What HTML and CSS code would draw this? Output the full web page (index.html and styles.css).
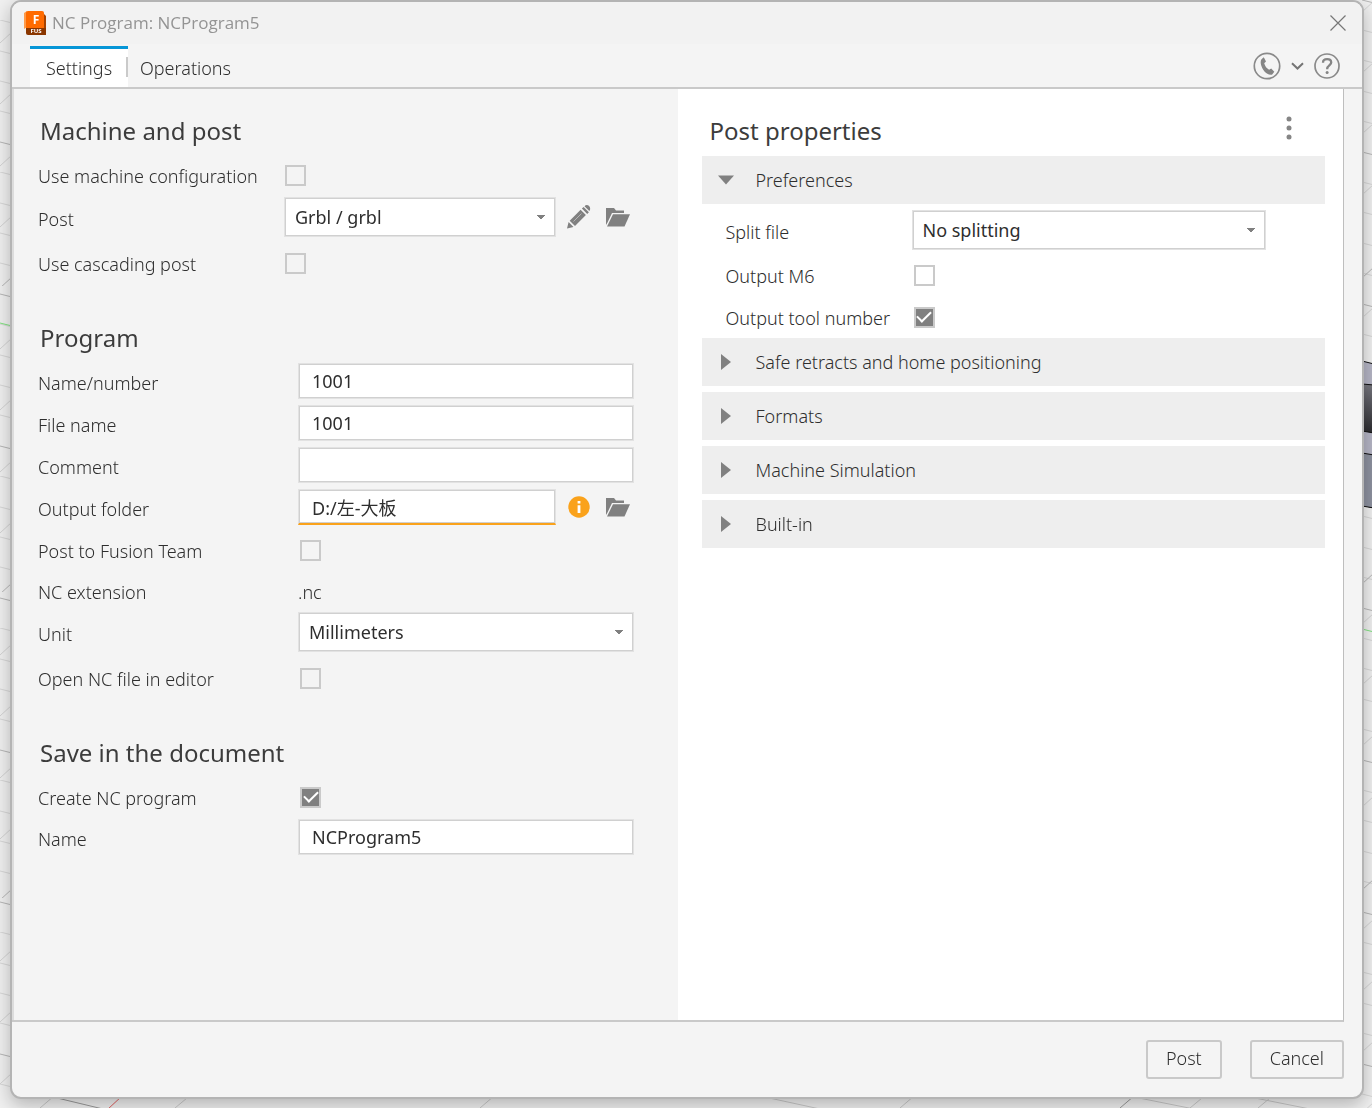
FILE: index.html
```html
<!DOCTYPE html>
<html lang="en">
<head>
<meta charset="utf-8">
<title>NC Program: NCProgram5</title>
<link rel="stylesheet" href="styles.css">
</head>
<body>
<svg class="canvas" viewBox="0 0 1372 1108" preserveAspectRatio="none" aria-hidden="true">
  <defs>
    <pattern id="falling" width="1372" height="152" patternUnits="userSpaceOnUse" y="20">
      <path d="M0 0l12 3M0 31l12 3M0 61l12 3M0 91l12 3M1362 10l12 3M1362 40l12 3M1362 71l12 3M1362 101l12 3" stroke="#d6d6d6"/>
      <path d="M0 122l12 3M1362 132l12 3" stroke="#b5b5b5"/>
    </pattern>
    <pattern id="rising" width="1372" height="306" patternUnits="userSpaceOnUse" y="-20">
      <path d="M0 63l12-11M0 124l12-11M0 186l12-11M0 247l12-11M1362 32l12-11M1362 93l12-11M1362 154l12-11M1362 215l12-11" stroke="#d2d2d2"/>
      <path d="M0 308l12-11M1362 298l12-11" stroke="#b5b5b5"/>
    </pattern>
    <linearGradient id="metal" x1="0" y1="0" x2="0" y2="1">
      <stop offset="0" stop-color="#77777f"/><stop offset="1" stop-color="#2c2c30"/>
    </linearGradient>
  </defs>
  <rect width="1372" height="1108" fill="url(#falling)"/>
  <rect width="1372" height="1108" fill="url(#rising)"/>
  <path d="M40 1108l14-12M187 1098l-12 10M1190 1108l12-10M1258 1108l12-10M1134 1097l60 12M1250 1097l60 12M480 1108l14-12M760 1096l60 13M900 1108l14-12" stroke="#c8c8c8"/>
  <path d="M53 1097l50 12M1120 1108l14-12" stroke="#999"/>
  <path d="M108 1109l14-13M1326 3l4-4" stroke="#e06060"/>
  <path d="M0 323l12 3M1362 629l12 3" stroke="#7fe27f"/>
  <path d="M1362 361l12 3v144l-12-3z" fill="#b5b5c5" stroke="#111"/>
  <path d="M1362 384l12 1v48l-12-2z" fill="url(#metal)" stroke="#111"/>
  <path d="M1362 453l12 2v53l-12-2z" fill="#8d919f" stroke="#111"/>
</svg>

<main class="dialog">
  <header class="titlebar">
    <svg class="logo" viewBox="0 0 22 24" aria-hidden="true">
      <path d="M0 2l3-2v16l-3 2z" fill="#ff9b4a"/>
      <path d="M2 2a2 2 0 0 1 2-2h14a2 2 0 0 1 2 2v15H2z" fill="#ff6b00"/>
      <path d="M20 3l2 2v19l-2-1z" fill="#a54200"/>
      <path d="M2 17h20v7H4a2 2 0 0 1-2-2z" fill="#8a3600"/>
      <text x="12" y="13" class="logo-letter">F</text>
      <text x="12" y="22" class="logo-tag">FUS</text>
    </svg>
    <h1 class="title">NC Program: NCProgram5</h1>
    <button class="icon-button" type="button" aria-label="Close">
      <svg width="16" height="16" viewBox="0 0 16 16"><path d="M.5.5l15 15M15.5.5l-15 15" stroke="#777" stroke-width="1.2"/></svg>
    </button>
  </header>

  <nav class="tabs">
    <button class="tab tab-active" type="button">Settings</button>
    <button class="tab" type="button">Operations</button>
    <div class="tools">
      <button class="icon-button" type="button" aria-label="Contact support">
        <svg width="28" height="28" viewBox="0 0 28 28"><circle cx="14" cy="14" r="12.7" fill="none" stroke="#8a8a8a" stroke-width="1.7"/><path d="M8.5 7.2l2.3-1.9 2.2 4.2-1.8 1.8c.8 3 2.5 5.2 4.9 6.4l2.1-1.2 3.1 3.3-2.1 2.7c-2.4.8-6.6-.9-9-4.8-2.5-3.900-3.300-8.300-1.700-10.500z" fill="#858585"/></svg>
      </button>
      <button class="icon-button" type="button" aria-label="More support options">
        <svg width="13" height="8" viewBox="0 0 13 8"><path d="M1 1.200l5.500 5.300L12 1.200" fill="none" stroke="#757575" stroke-width="2"/></svg>
      </button>
      <button class="icon-button" type="button" aria-label="Help">
        <svg width="26" height="28" viewBox="0 0 26 28"><circle cx="13" cy="14" r="12" fill="none" stroke="#8a8a8a" stroke-width="1.700"/><path d="M9 10.700c0-2.200 1.700-3.500 4.100-3.500s4.100 1.300 4.100 3.300c0 2.700-4 3-4 6.200v.6" fill="none" stroke="#858585" stroke-width="2.300"/><circle cx="13.100" cy="20.600" r="1.500" fill="#858585"/></svg>
      </button>
    </div>
  </nav>

  <div class="panels">
    <form class="panel panel-form">
      <section class="group group-machine">
        <h2 class="heading">Machine and post</h2>
        <div class="row row-check"><label for="use-machine">Use machine configuration</label><input type="checkbox" id="use-machine"></div>
        <div class="row row-select">
          <label for="post">Post</label>
          <select id="post"><option>Grbl / grbl</option></select>
          <div class="actions">
            <button class="icon-button" type="button" aria-label="Edit post">
              <svg width="24" height="24" viewBox="0 0 24 24" fill="#808080"><path d="M0 23.500l1.600-6.400 4.900 4.900zM2.700 15.700L13.600 4.800l5.300 5.300L8 21zM14.900 3.600l1.700-1.700 5.300 5.300-1.700 1.700zM17.500 1.200c1.300-1.500 3.300-1.400 4.600-.1s1.500 3.400.2 4.800z"/><path d="M6.500 16.500l8-8" stroke="#b5b5b5"/></svg>
            </button>
            <button class="icon-button" type="button" aria-label="Browse posts">
              <svg width="24" height="19" viewBox="0 0 24 19" fill="#808080"><path d="M0 0h8l2 2.500h8V5H6L1.500 14.500 0 17z"/><path d="M7 6.200h17L18.500 18.500H1z"/></svg>
            </button>
          </div>
        </div>
        <div class="row row-check"><label for="cascading">Use cascading post</label><input type="checkbox" id="cascading"></div>
      </section>

      <section class="group">
        <h2 class="heading">Program</h2>
        <div class="row"><label for="number">Name/number</label><input type="text" id="number" value="1001"></div>
        <div class="row"><label for="file">File name</label><input type="text" id="file" value="1001"></div>
        <div class="row"><label for="comment">Comment</label><input type="text" id="comment"></div>
        <div class="row">
          <label for="folder">Output folder</label>
          <input type="text" id="folder" class="warning" value="D:/左-大板">
          <div class="actions">
            <button class="icon-button" type="button" aria-label="Folder information">
              <svg width="24" height="24" viewBox="0 0 24 24"><circle cx="12" cy="12" r="10.700" fill="#faa21b"/><path d="M10.600 6h2.800v2.600h-2.800zM10.600 10.200h2.800v7.800h-2.800z" fill="#fff"/></svg>
            </button>
            <button class="icon-button" type="button" aria-label="Browse folders">
              <svg width="24" height="19" viewBox="0 0 24 19" fill="#808080"><path d="M0 0h8l2 2.500h8V5H6L1.500 14.500 0 17z"/><path d="M7 6.200h17L18.500 18.500H1z"/></svg>
            </button>
          </div>
        </div>
        <div class="row row-check"><label for="team">Post to Fusion Team</label><input type="checkbox" id="team"></div>
        <div class="row row-text"><span class="label">NC extension</span><span>.nc</span></div>
        <div class="row row-select"><label for="unit">Unit</label><select id="unit"><option>Millimeters</option></select></div>
        <div class="row row-check"><label for="open">Open NC file in editor</label><input type="checkbox" id="open"></div>
      </section>

      <section class="group">
        <h2 class="heading">Save in the document</h2>
        <div class="row row-check"><label for="create">Create NC program</label><input type="checkbox" id="create" checked></div>
        <div class="row row-flush"><label for="name">Name</label><input type="text" id="name" value="NCProgram5"></div>
      </section>
    </form>

    <section class="panel panel-properties">
      <div class="properties-head">
        <h2 class="heading">Post properties</h2>
        <button class="icon-button" type="button" aria-label="Property options">
          <svg width="6" height="24" viewBox="0 0 6 24" fill="#858585"><circle cx="3" cy="3" r="2.500"/><circle cx="3" cy="12" r="2.500"/><circle cx="3" cy="21" r="2.500"/></svg>
        </button>
      </div>
      <div class="fold">
        <button class="fold-head" type="button" aria-expanded="true"><svg width="16" height="16" viewBox="0 0 16 16"><path d="M0 3.500h16L8 12.500z" fill="#808080"/></svg>Preferences</button>
        <div class="fold-body">
          <div class="row row-select"><label for="split">Split file</label><select id="split"><option>No splitting</option></select></div>
          <div class="row"><label for="m6">Output M6</label><input type="checkbox" id="m6"></div>
          <div class="row"><label for="tool">Output tool number</label><input type="checkbox" id="tool" checked></div>
        </div>
      </div>
      <div class="fold-list">
        <button class="fold-head" type="button" aria-expanded="false"><svg width="16" height="16" viewBox="0 0 16 16"><path d="M3 0v16l10-8z" fill="#808080"/></svg>Safe retracts and home positioning</button>
        <button class="fold-head" type="button" aria-expanded="false"><svg width="16" height="16" viewBox="0 0 16 16"><path d="M3 0v16l10-8z" fill="#808080"/></svg>Formats</button>
        <button class="fold-head" type="button" aria-expanded="false"><svg width="16" height="16" viewBox="0 0 16 16"><path d="M3 0v16l10-8z" fill="#808080"/></svg>Machine Simulation</button>
        <button class="fold-head" type="button" aria-expanded="false"><svg width="16" height="16" viewBox="0 0 16 16"><path d="M3 0v16l10-8z" fill="#808080"/></svg>Built-in</button>
      </div>
    </section>
  </div>

  <footer class="footer">
    <button class="button" type="button">Post</button>
    <button class="button" type="button">Cancel</button>
  </footer>
</main>
</body>
</html>
```

FILE: styles.css
```css
* { box-sizing: border-box; }

body {
  margin: 0;
  min-height: 100vh;
  padding: 0 8px 9px 10px;
  display: flex;
  background: #f0f0f0;
  color: #2e2e2e;
  font: 300 18px/24px "Noto Sans", "Open Sans", "Noto Sans CJK SC", sans-serif;
}

/* Model canvas behind the dialog */
.canvas {
  position: fixed;
  inset: 0;
  width: 100%;
  height: 100%;
  fill: none;
}

.dialog {
  position: relative;
  flex: 1;
  display: flex;
  flex-direction: column;
  background: #f4f4f4;
  border: 2px solid #b4b4b4;
  border-radius: 11px;
  box-shadow: 0 6px 18px rgba(0, 0, 0, 0.25);
  overflow: hidden;
}

button, input, select { font: inherit; color: inherit; }

.icon-button {
  display: flex;
  padding: 0;
  border: 0;
  background: none;
}

/* Title bar */
.titlebar {
  display: flex;
  align-items: center;
  gap: 6px;
  height: 42px;
  padding: 0 16px 0 12px;
  background: #f2f2f2;
}

.logo { width: 22px; height: 24px; }
.logo-letter { font: 700 12px "Open Sans", sans-serif; fill: #fff; text-anchor: middle; }
.logo-tag { font: 700 6px "Open Sans", sans-serif; fill: #fff; text-anchor: middle; }

.title {
  flex: 1;
  margin: 0;
  font: 400 17px/24px "Open Sans", sans-serif;
  color: #949494;
}

/* Tabs */
.tabs {
  display: flex;
  height: 45px;
  padding: 2px 22px 0 18px;
  border-bottom: 2px solid #c9c9c9;
}

.tab {
  min-width: 98px;
  padding: 0 12px;
  border: 0;
  border-top: 3px solid transparent;
  background: none;
}

.tab-active {
  border-top-color: #0696d7;
  background: linear-gradient(#cacaca, #cacaca) right 8px / 2px 20px no-repeat #fff;
}

.tools {
  display: flex;
  align-items: center;
  gap: 10px;
  margin-left: auto;
  padding-bottom: 2px;
}

/* Panels */
.panels {
  flex: 1;
  display: grid;
  grid-template-columns: minmax(0, 1fr) minmax(0, 1fr);
  margin-right: 18px;
  border-right: 1px solid #bebebe;
  border-bottom: 2px solid #c9c9c9;
}

.panel-form {
  padding: 20px 44px 20px 24px;
  border-left: 2px solid #dcdcdc;
}

.panel-properties {
  padding: 20px 18px 20px 24px;
  background: #fff;
}

.heading {
  margin: 0;
  padding-left: 2px;
  font-size: 24px;
  font-weight: 400;
  line-height: 44px;
  color: #3c3c3c;
}

.group + .group { margin-top: 31px; }

.row {
  display: flex;
  align-items: center;
  height: 42px;
}

.row label, .label { flex: none; width: 260px; padding-top: 4px; }
.group-machine .row label { width: 246px; }
.group-machine .row-check label { width: 245px; }
.row-check { height: 44px; }
.row-check label { padding-top: 2px; }
.row-text { height: 40px; }
.row-text .label { padding-top: 0; }
.row-select { height: 40px; margin-bottom: 4px; }
.row-flush { height: 36px; }

input[type="text"], select {
  flex: 1;
  min-width: 0;
  border: 1px solid #e2e2e2;
  border-radius: 0;
  background-color: #fff;
  box-shadow: inset 0 0 0 1px #d0d0d0;
  font-weight: 400;
}

input[type="text"] { height: 36px; padding: 0 13px; }
input.warning { border-bottom: 2px solid #faa21b; }

select {
  appearance: none;
  height: 40px;
  padding: 0 10px;
  background-image: linear-gradient(to bottom right, #808080 50%, transparent 50%), linear-gradient(to bottom left, #808080 50%, transparent 50%);
  background-size: 4px 5px;
  background-position: right 10px center, right 14px center;
  background-repeat: no-repeat;
}

input[type="checkbox"] {
  appearance: none;
  width: 21px;
  height: 21px;
  margin: 0 0 0 2px;
  border: 2px solid #cacaca;
}

input[type="checkbox"]:checked {
  display: grid;
  place-items: center;
  background: #808080;
}

input[type="checkbox"]:checked::before {
  content: "";
  width: 12px;
  height: 6px;
  margin-bottom: 4px;
  border: solid #fff;
  border-width: 0 0 2px 2px;
  transform: rotate(-45deg);
}

.actions {
  display: flex;
  align-items: center;
  gap: 15px;
  padding: 0 4px 0 11px;
}

/* Post properties */
.properties-head {
  display: flex;
  align-items: center;
  justify-content: space-between;
  margin-bottom: 3px;
  padding: 0 33px 0 6px;
}

.properties-head .icon-button { padding-bottom: 6px; }

.fold-head {
  display: flex;
  align-items: center;
  gap: 22px;
  width: 100%;
  height: 48px;
  padding: 0 16px 1px;
  border: 0;
  background: #eee;
  text-align: left;
}

.fold-body { padding: 6px 59px 0 24px; }
.fold-body .row label { width: 186px; }
.fold-body .row + .row label { padding-top: 2px; }
.fold-list { display: grid; gap: 6px; }

/* Footer */
.footer {
  display: flex;
  justify-content: flex-end;
  gap: 28px;
  padding: 18px;
}

.button {
  height: 39px;
  padding: 0 18px 3px;
  border: 2px solid #c9c9c9;
  border-radius: 3px;
  background: none;
}
```
